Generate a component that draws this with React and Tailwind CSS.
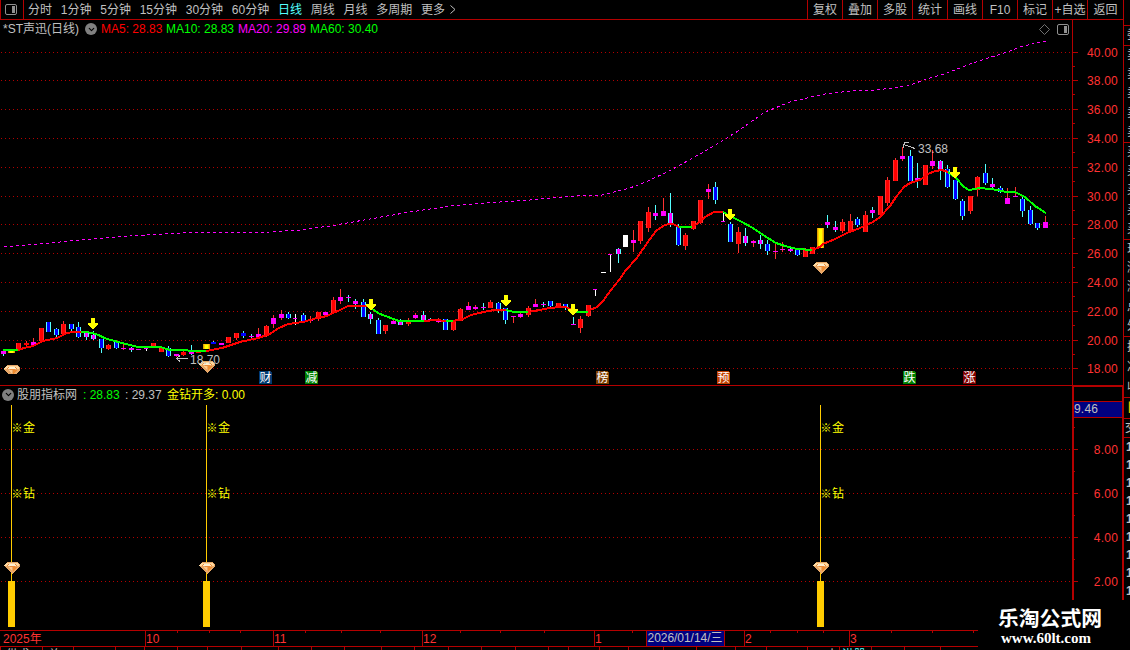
import { ChevronDown } from 'lucide-react';

const periods = ['分时', '1分钟', '5分钟', '15分钟', '30分钟', '60分钟', '日线', '周线', '月线', '多周期', '更多'];
const tools = ['复权', '叠加', '多股', '统计', '画线', 'F10', '标记', '+自选', '返回'];

// type, high, body top, body bottom, low
// r = up, b = down, m = magenta on red wick, c = magenta on cyan wick, g = gold signal, w = white
const candles = [
    ['c', 350, 351, 354, 356], ['g', 350, 350, 353, 353], ['r', 343, 343, 350, 350], ['r', 341, 343, 345, 347],
    ['m', 338, 342, 345, 346], ['r', 328, 328, 341, 342], ['b', 322, 322, 332, 332], ['b', 328, 329, 335, 337],
    ['r', 321, 324, 334, 335], ['b', 324, 324, 329, 331], ['b', 322, 327, 337, 338], ['c', 332, 333, 337, 340],
    ['c', 331, 335, 339, 340], ['b', 339, 339, 348, 353], ['r', 344, 345, 349, 350], ['b', 342, 342, 348, 349],
    ['m', 344, 348, 349, 350], ['c', 347, 348, 350, 352], ['m', 349, 349, 350, 350], ['w', 347, 348, 349, 351],
    ['r', 343, 343, 347, 347], ['r', 347, 347, 352, 352], ['b', 346, 348, 356, 357], ['m', 354, 354, 356, 357],
    ['r', 351, 352, 355, 356], ['c', 345, 352, 354, 355], ['r', 350, 350, 353, 353], ['g', 344, 344, 349, 349],
    ['b', 341, 342, 344, 344], ['m', 343, 343, 345, 345], ['r', 337, 337, 343, 343], ['r', 333, 333, 338, 340],
    ['b', 331, 333, 336, 338], ['c', 334, 336, 337, 339], ['m', 328, 334, 337, 339], ['r', 325, 326, 335, 337],
    ['m', 315, 318, 324, 328], ['m', 310, 314, 318, 320], ['b', 312, 314, 318, 319], ['w', 314, 318, 319, 325],
    ['b', 313, 315, 321, 322], ['m', 316, 319, 321, 323], ['r', 312, 312, 319, 321], ['m', 312, 312, 315, 316],
    ['r', 297, 300, 313, 314], ['m', 289, 297, 301, 304], ['c', 295, 297, 298, 302], ['c', 299, 301, 304, 309],
    ['b', 299, 302, 317, 317], ['c', 312, 314, 319, 324], ['b', 318, 320, 334, 334], ['r', 325, 325, 331, 334],
    ['m', 319, 321, 324, 324], ['c', 319, 321, 325, 325], ['r', 318, 320, 324, 326], ['m', 313, 315, 318, 319],
    ['c', 311, 315, 320, 320], ['c', 318, 319, 321, 321], ['m', 318, 319, 322, 323], ['b', 319, 319, 330, 330],
    ['r', 320, 321, 330, 331], ['r', 308, 309, 321, 321], ['m', 302, 306, 310, 310], ['m', 305, 307, 309, 310],
    ['c', 303, 307, 308, 310], ['r', 300, 302, 308, 308], ['b', 302, 303, 309, 313], ['b', 308, 308, 320, 324],
    ['m', 316, 316, 317, 323], ['m', 313, 314, 317, 318], ['r', 306, 308, 315, 317], ['m', 299, 304, 307, 307],
    ['c', 302, 304, 305, 307], ['b', 301, 301, 306, 307], ['r', 303, 303, 307, 307], ['b', 304, 304, 308, 310],
    ['c', 317, 324, 325, 325], ['r', 316, 319, 328, 333], ['r', 305, 305, 316, 317], ['w', 289, 289, 290, 296],
    ['w', 272, 272, 273, 273], ['w', 254, 254, 255, 272], ['c', 248, 249, 254, 263], ['W', 235, 235, 247, 247],
    ['m', 230, 240, 243, 252], ['r', 221, 221, 241, 244], ['r', 207, 212, 228, 232], ['c', 205, 213, 216, 220],
    ['m', 198, 211, 216, 216], ['c', 193, 213, 225, 227], ['b', 224, 227, 245, 246], ['r', 233, 235, 246, 250],
    ['r', 221, 221, 229, 230], ['r', 200, 200, 223, 224], ['m', 184, 189, 192, 199], ['b', 182, 187, 200, 204],
    ['w', 213, 221, 222, 222], ['b', 222, 224, 242, 242], ['r', 227, 232, 244, 253], ['c', 228, 236, 243, 246],
    ['m', 240, 241, 243, 247], ['c', 235, 240, 244, 249], ['b', 240, 244, 251, 255], ['m', 244, 251, 252, 259],
    ['m', 242, 249, 250, 252], ['c', 248, 249, 251, 252], ['b', 250, 250, 255, 256], ['r', 248, 250, 257, 257],
    ['r', 247, 247, 254, 254], ['g', 228, 228, 248, 248], ['c', 215, 222, 225, 228], ['c', 221, 227, 230, 232],
    ['r', 219, 222, 231, 233], ['r', 214, 221, 232, 232], ['b', 217, 219, 225, 227], ['r', 211, 215, 232, 232],
    ['c', 207, 210, 213, 218], ['r', 196, 196, 215, 215], ['r', 177, 180, 203, 206], ['r', 158, 160, 181, 181],
    ['m', 147, 156, 159, 161], ['b', 150, 156, 181, 181], ['c', 163, 178, 181, 188], ['r', 165, 165, 185, 185],
    ['m', 150, 161, 166, 169], ['c', 160, 161, 170, 180], ['b', 165, 169, 187, 188], ['b', 180, 180, 199, 200],
    ['b', 199, 201, 216, 220], ['r', 196, 196, 211, 214], ['r', 176, 177, 190, 196], ['b', 164, 173, 183, 185],
    ['c', 178, 184, 187, 188], ['b', 186, 188, 192, 193], ['m', 188, 198, 204, 204], ['m', 187, 196, 197, 197],
    ['b', 197, 199, 211, 217], ['b', 206, 210, 224, 225], ['b', 223, 223, 228, 230], ['m', 216, 222, 228, 228],
];

const bodyColors = { r: '#ff0000', b: '#0000ff', m: '#ff00ff', c: '#ff00ff', w: '#ff00ff', W: '#ffffff' };
const wickColors = { r: '#ff3232', b: '#54ffff', m: '#ff3232', c: '#54ffff', w: '#ffffff', W: '#ffffff', g: '#ffcc00' };

const trend = [
    ['g', '3,350 18,350'],
    ['r', '18,350 24,348 33,346 43,341 57,338 67,333 73,332 81,332'],
    ['g', '81,332 87,332 96,334 107,339 122,343 138,347 160,347 170,350 206,351'],
    ['r', '206,351 222,348 240,342 258,338 270,334 277,329 288,324 303,322 317,318 327,316 333,313 340,310 348,306 367,306'],
    ['g', '367,306 372,309 380,314 399,321 424,321'],
    ['r', '424,321 436,320 446,321'],
    ['g', '446,321 453,321'],
    ['r', '453,321 463,319 471,315 488,311 495,310 506,310'],
    ['g', '506,310 514,312 528,312'],
    ['r', '528,312 534,311 550,308 560,307 566,307 572,310'],
    ['g', '572,310 577,312 588,312'],
    ['r', '588,312 590,310 597,307 603,301 611,290 619,280 626,270 636,259 643,249 650,239 656,231 663,226 668,224 673,224 679,227'],
    ['g', '679,227 692,227'],
    ['r', '692,227 697,224 705,217 714,212 723,212'],
    ['g', '723,212 728,215 734,218 742,222 753,228 763,235 776,243 785,246 797,249 812,250'],
    ['r', '812,250 820,247 823,244 835,239 847,233 860,228 873,222 880,217 890,206 896,197 904,187 910,183 920,180 928,174 935,171 942,170 948,172'],
    ['g', '948,172 956,178 964,187 969,190 980,188 998,190 1006,192 1015,192 1025,197 1035,206 1046,213'],
];

const ma60 = '4,247 40,244 80,240 130,236 180,233 270,232 300,230 330,226 370,219 410,212 450,206 500,202 530,200 550,198 590,195 602,195 630,188 648,181 669,171 700,154 735,133 765,112 790,102 807,98 825,94 850,91 877,90 907,86 930,78 947,73 973,63 1007,52 1023,46 1046,41';

const priceGrid = [52, 80, 109, 138, 167, 196, 224, 253, 282, 311, 340, 368];
const volGrid = [449, 493, 537, 581];
const arrows = [[93, 318], [371, 299], [506, 295], [573, 304], [730, 209], [955, 167]];
const badges = [
    [259, '财', '#003a70'], [305, '减', '#008000'], [596, '榜', '#804000'],
    [717, '预', '#c04000'], [903, '跌', '#008000'], [963, '涨', '#800000'],
];
const signals = [11, 206, 820];

const months = [[145, '10'], [273, '11'], [422, '12'], [594, '1'], [744, '2'], [849, '3']];
const weekTicks = [177, 209, 240, 305, 341, 380, 460, 500, 544, 632, 770, 797, 823, 891, 932, 973];
const statusTicks = [0, 42, 73, 115, 144, 177, 207, 241, 278, 311, 344, 381, 414, 448, 481, 515, 548, 568, 599, 628, 663, 696, 735, 766, 807, 839, 871, 904, 940];

function Candle({ i, data }) {
    const [type, high, top, bottom, low] = data;
    const x = Math.floor(3.8 + 7.492 * i);
    if (type === 'g') {
        return (
            <g>
                <rect x={x - 3} y={top} width="7" height={bottom - top} fill="#e0a000" />
                <rect x={x - 2} y={top} width="5" height={bottom - top} fill="#ffcc00" />
                <rect x={x - 1} y={top + 1} width="3" height={bottom - top - 1} fill="#ffff00" />
            </g>
        );
    }
    const h = Math.max(1, bottom - top);
    const flat = type === 'w' && high === low - 1;
    return (
        <g>
            <rect x={x} y={high} width="1" height={low - high} fill={wickColors[type]} />
            <rect x={x - 2} y={top} width={type === 'w' && !flat ? 4 : 5} height={h} fill={flat ? '#fff' : h > 3 ? wickColors[type] : bodyColors[type]} />
            {h > 3 && <rect x={type === 'm' ? x - 2 : x - 1} y={top} width={type === 'm' ? 5 : 3} height={h} fill={bodyColors[type]} />}
        </g>
    );
}

function Gem({ x, y, cut }) {
    return (
        <svg x={x} y={y} width="16" height={cut ? 9 : 12} viewBox={cut ? '0 0 16 9' : '0 0 16 12'}>
            {cut ? (
                <path d="M3 0H13L16 3V5L12 9H4L0 5V3Z" fill="#e8a868" />
            ) : (
                <path d="M3 0H13L16 3V4L8 12L0 4V3Z" fill="#e8a868" />
            )}
            <path d="M3 0.5H13L15.5 3.5H0.5Z" fill="#ffd9a0" />
            <path d="M5 1.5H11L13 4L8 5L3 4Z" fill="#ee8a38" />
            <path d="M6 2H10L12 3.5H4Z" fill="#fff0d0" />
            <path d="M4 5H8V9Z" fill="#ffc98a" />
            <path d="M9 5H13L9 9Z" fill="#f08c30" />
        </svg>
    );
}

function Grid({ rows, start = 1 }) {
    return rows.map((y) => (
        <line key={y} x1={start} x2="1072" y1={y + 0.5} y2={y + 0.5} stroke="#b40000" strokeDasharray="1 3" />
    ));
}

function Chevron() {
    return (
        <span className="flex size-3 items-center justify-center rounded-full bg-[#808080] text-black">
            <ChevronDown size={9} strokeWidth={3} />
        </span>
    );
}

function PanelIcon({ className }) {
    return (
        <svg className={className} width="12" height="11" viewBox="0 0 12 11">
            <rect x="0.5" y="0.5" width="11" height="10" rx="1.5" fill="none" stroke="#909090" />
            <rect x="7" y="2" width="3" height="7" fill="#909090" />
        </svg>
    );
}

function TopBar() {
    return (
        <div className="flex h-5 shrink-0 border-b border-[#b40000]">
            <div className="flex w-6 items-center justify-center border-r border-l border-[#b40000]">
                <PanelIcon className="-translate-x-px" />
            </div>
            <div className="flex flex-1 items-center gap-[8.75px] pl-1">
                {periods.map((p) => (
                    <span key={p} className={p === '日线' ? 'text-[#54ffff]' : ''}>{p}</span>
                ))}
                <svg className="-ml-1" width="6" height="9" viewBox="0 0 6 9">
                    <path d="M0.5 0.5L5 4.5L0.5 8.5" fill="none" stroke="#c0c0c0" />
                </svg>
            </div>
            {tools.map((t) => (
                <div key={t} className="flex w-[35px] items-center justify-center border-l border-[#b40000] last:w-9">{t}</div>
            ))}
        </div>
    );
}

function PricePanel() {
    return (
        <div className="flex h-[366px] w-[1072px] shrink-0 flex-col border-b border-[#b40000]">
            <div className="flex h-[18px] items-center pl-[3px]">
                <span className="w-[82px]">*ST声迅(日线)</span>
                <Chevron />
                <span className="ml-1 w-[65px] text-[#ff0000]">MA5: 28.83</span>
                <span className="w-[72px] text-[#00ff00]">MA10: 28.83</span>
                <span className="w-[72px] text-[#ff00ff]">MA20: 29.89</span>
                <span className="flex-1 text-[#00ff00]">MA60: 30.40</span>
                <svg className="mr-[7px]" width="11" height="11" viewBox="0 0 11 11">
                    <path d="M5.5 0.5L10.5 5.5L5.5 10.5L0.5 5.5Z" fill="none" stroke="#707070" />
                </svg>
                <PanelIcon className="mr-[3px]" />
            </div>
            <svg width="1072" height="347" viewBox="0 38 1072 347" shapeRendering="crispEdges">
                <Grid rows={priceGrid} />
                <polyline points={ma60} fill="none" stroke="#ff00ff" strokeDasharray="3 3" />
                {candles.map((c, i) => <Candle key={i} i={i} data={c} />)}
                {trend.map(([c, pts]) => (
                    <polyline key={pts} points={pts} fill="none" strokeWidth="2" stroke={c === 'r' ? '#ff0000' : '#00ff00'} />
                ))}
                {arrows.map(([x, y]) => (
                    <path key={x} d={`M${x - 2} ${y}h4v5h3v2l-5 4l-5 -4v-2h3z`} fill="#ffff00" />
                ))}
                <Gem x={4} y={365} cut />
                <Gem x={199} y={361} />
                <Gem x={813} y={262} />
                <g fill="none" stroke="#c0c0c0">
                    <path d="M188 358.5H176.5M180 355.5L176.5 358.5L180 361.5" />
                    <path d="M915 148.5L903.5 144.5M909 142.5H904.5L903.5 145V148" />
                </g>
                <text x="190" y="364" fill="#c0c0c0">18.70</text>
                <text x="918" y="153" fill="#c0c0c0">33.68</text>
                {badges.map(([x, label, color]) => (
                    <g key={x}>
                        <path d={`M${x} 371h11l2 2v11h-13z`} fill={color} />
                        <text x={x + 0.5} y="382" fill="#fff">{label}</text>
                    </g>
                ))}
            </svg>
        </div>
    );
}

function SignalPanel() {
    return (
        <div className="flex h-[244px] w-[1072px] shrink-0 flex-col">
            <div className="flex h-[17px] items-center pl-0.5">
                <Chevron />
                <span className="ml-[3px] w-[66px]">股朋指标网</span>
                <span className="w-[42px] text-[#00ff00]">: 28.83</span>
                <span className="w-[42px]">: 29.37</span>
                <span className="text-[#ffff00]">金钻开多: 0.00</span>
            </div>
            <svg width="1072" height="227" viewBox="0 403 1072 227" shapeRendering="crispEdges">
                <Grid rows={volGrid} />
                {signals.map((x) => (
                    <g key={x}>
                        <rect x={x} y="405" width="1" height="176" fill="#ffcc00" />
                        <rect x={x - 3} y="581" width="7" height="46" fill="#ffcc00" />
                        <Gem x={x - 7} y={562} />
                        {['金', '钻'].map((label, n) => (
                            <g key={label} fill="#ffff00">
                                <text x={x + 0.5} y={431.5 + n * 66} fontSize="11" fontWeight="700">※</text>
                                <text x={x + 12} y={432 + n * 66}>{label}</text>
                            </g>
                        ))}
                    </g>
                ))}
            </svg>
        </div>
    );
}

function PriceAxis() {
    return (
        <svg className="border-l border-[#b40000] tracking-[0.2px]" width="51" height="365" viewBox="1073 20 50 365" shapeRendering="crispEdges">
            {priceGrid.map((y, i) => (
                <g key={y}>
                    <rect x="1073" y={y} width="5" height="1" fill="#b40000" />
                    {i < 11 && <rect x="1073" y={y + 14} width="2" height="1" fill="#b40000" />}
                    <text x="1118" y={y + 5} textAnchor="end" fill="#ff3232">{`${40 - i * 2}.00`}</text>
                </g>
            ))}
        </svg>
    );
}

function SignalAxis() {
    return (
        <div className="flex h-[245px] w-[52px] flex-col border-2 border-b-0 border-[#b40000] tracking-[0.2px]">
            <div className="mt-3.5 h-[17px] border-y border-[#b40000] bg-[#000080] leading-[14px]">9.46</div>
            <svg width="48" height="212" viewBox="1074 418 48 212" shapeRendering="crispEdges">
                {volGrid.map((y, i) => (
                    <g key={y}>
                        <rect x="1074" y={y} width="4" height="1" fill="#b40000" />
                        <rect x="1074" y={y - 22} width="1" height="1" fill="#b40000" />
                        <text x="1118" y={y + 5} textAnchor="end" fill="#ff3232">{`${8 - i * 2}.00`}</text>
                    </g>
                ))}
            </svg>
        </div>
    );
}

function TimeAxis() {
    return (
        <div className="h-5 w-[978px] shrink-0 overflow-hidden">
            <svg width="978" height="20" viewBox="0 630 978 20" shapeRendering="crispEdges">
                <rect x="0" y="630" width="978" height="1" fill="#b40000" />
                <rect x="0" y="646" width="978" height="1" fill="#b40000" />
                {weekTicks.map((x) => <rect key={x} x={x} y="631" width="1" height="2" fill="#b40000" />)}
                {statusTicks.map((x) => <rect key={x} x={x} y="647" width="1" height="3" fill="#b40000" />)}
                <text x="3" y="643" fill="#ff3232">2025年</text>
                {months.map(([x, label]) => (
                    <g key={x}>
                        <rect x={x} y="631" width="1" height="15" fill="#b40000" />
                        <text x={x + 1} y="643" fill="#ff3232">{label}</text>
                    </g>
                ))}
                <rect x="646.5" y="630.5" width="78" height="16" fill="#000080" stroke="#b40000" />
                <text x="647.5" y="642" textLength="75" fill="#c0c0c0">2026/01/14/三</text>
                <text x="6" y="659" fill="#c0c0c0">供求</text>
                <text x="48" y="659" fill="#c0c0c0">总</text>
                <text x="826" y="659" fill="#c0c0c0">小</text>
                <text x="842" y="659" fill="#54ffff">港股</text>
            </svg>
        </div>
    );
}

function QuoteStrip() {
    const groups = ['卖卖卖卖卖', '买买买买买', '现涨涨总外', '换净收'];
    return (
        <div className="flex h-[600px] w-[7px] shrink-0 flex-col overflow-hidden border-l border-[#b40000]">
            <div className="mt-[25px] h-5 border-t border-[#b40000] pl-[3px] leading-[19px]">委</div>
            {groups.map((g, n) => (
                <div key={n} className={`flex shrink-0 flex-col justify-around border-t border-[#b40000] pl-[3px] leading-[19px] ${n === 3 ? 'h-[61px]' : 'h-[97px]'}`}>
                    {g.split('').map((c, i) => <span key={i} className="h-[19px]">{c}</span>)}
                </div>
            ))}
            <div className="h-[21px] shrink-0 border-t border-[#b40000] pl-[3px] leading-5 font-bold text-[#e0c000]">日</div>
            <div className="h-[19px] shrink-0 border-t border-[#b40000] pl-px leading-[18px]">交</div>
            <div className="shrink-0 border-t border-[#b40000] pl-0.5 font-bold leading-[18px]">
                {Array.from({ length: 9 }, (_, i) => <div key={i}>1</div>)}
            </div>
        </div>
    );
}

export default function App() {
    return (
        <div className="relative flex h-[650px] w-[1130px] overflow-hidden bg-black font-['Liberation_Sans','Noto_Sans_CJK_SC',sans-serif] text-[12px] leading-none whitespace-nowrap text-[#c0c0c0]">
            <div className="flex w-[1123px] shrink-0 flex-col">
                <TopBar />
                <div className="flex">
                    <div>
                        <PricePanel />
                        <SignalPanel />
                    </div>
                    <div className="flex flex-col">
                        <PriceAxis />
                        <SignalAxis />
                    </div>
                </div>
                <TimeAxis />
            </div>
            <QuoteStrip />

            {/* Watermark */}
            <div className="absolute right-0 bottom-0 flex h-[50px] w-[152px] flex-col bg-black pt-2 pl-5 text-white">
                <span className="text-[20.8px] leading-[22px] font-bold">乐淘公式网</span>
                <span className="pl-[3px] font-['Liberation_Serif',serif] text-[15px] leading-[17px] font-bold">www.60lt.com</span>
            </div>
        </div>
    );
}
